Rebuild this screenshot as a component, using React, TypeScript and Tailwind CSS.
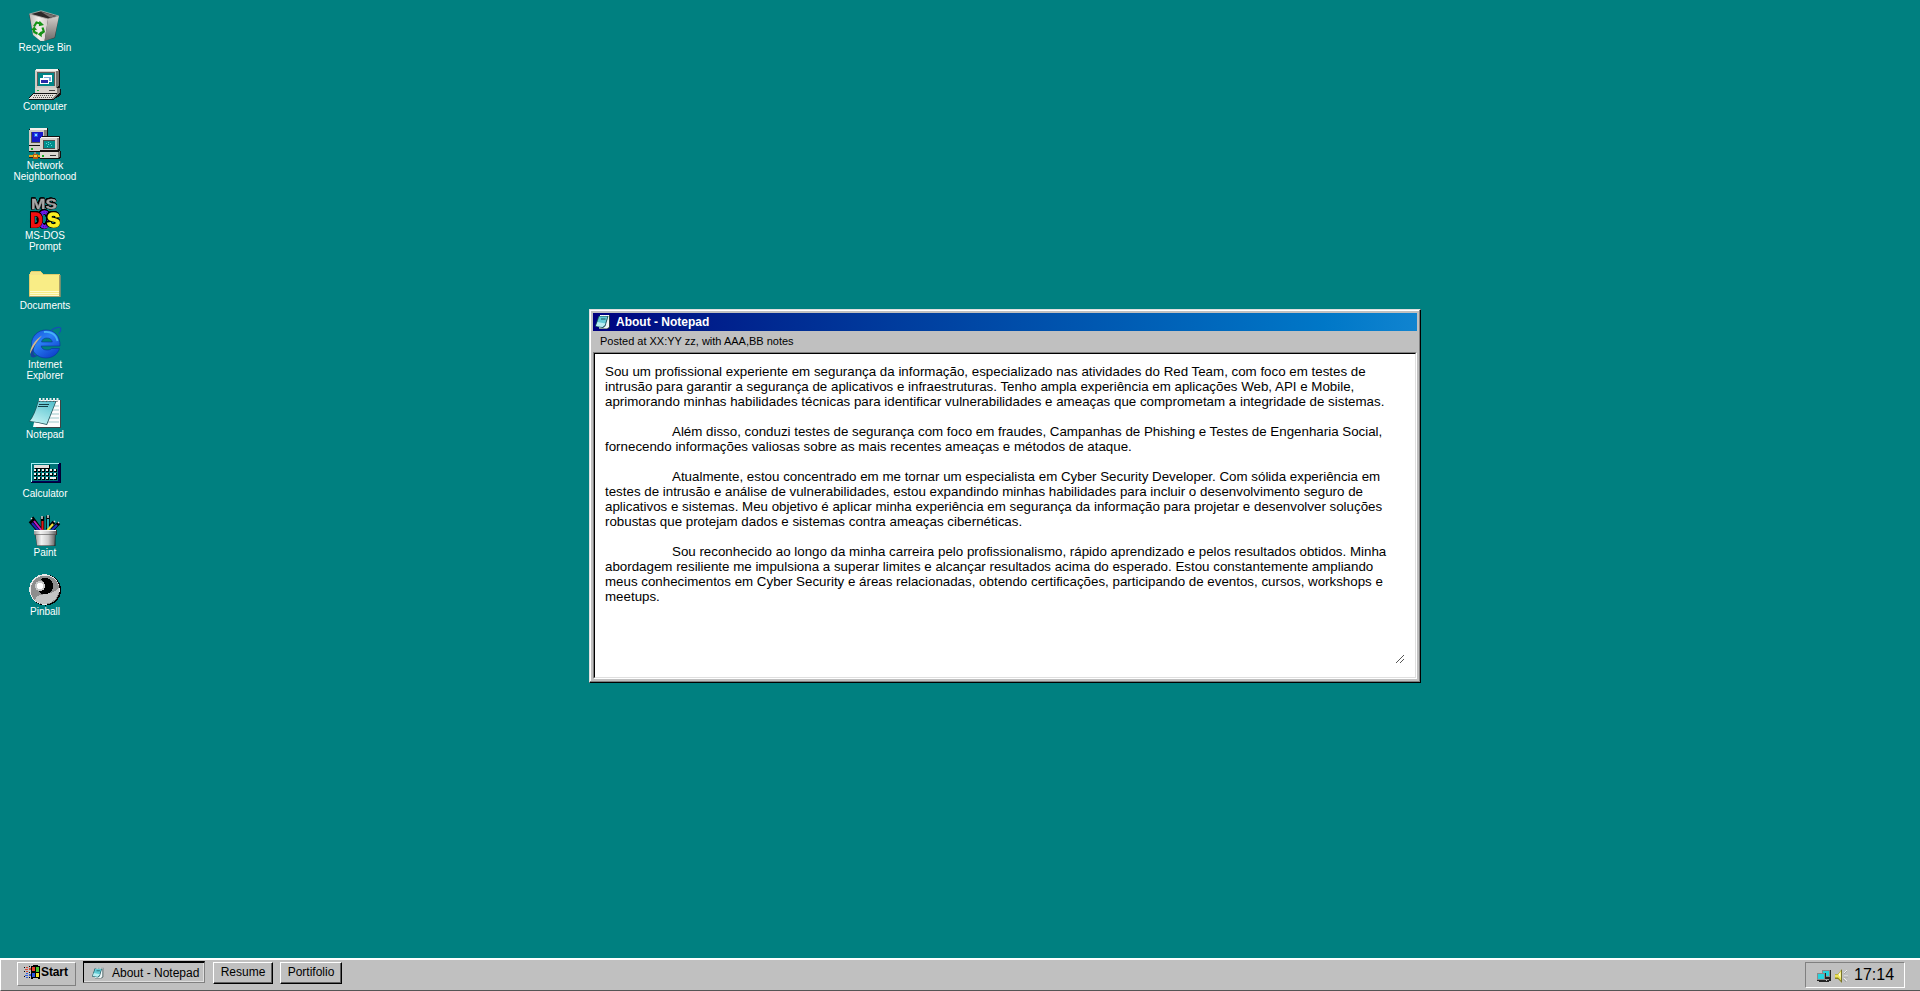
import type { ReactNode } from "react";

const Pic = ({ children, crisp = true, className = "size-8" }: { children: ReactNode; crisp?: boolean; className?: string }) => (
  <svg viewBox="0 0 32 32" className={`${className} block shrink-0 overflow-visible`} shapeRendering={crisp ? "crispEdges" : "auto"}>
    {children}
  </svg>
);

const RecycleIcon = () => (
  <Pic crisp={false}>
    <defs>
      <linearGradient id="binFront" x1="0" y1="0" x2="1" y2="0">
        <stop offset="0" stopColor="#bdb9b4" />
        <stop offset="0.5" stopColor="#f4f1ee" />
        <stop offset="1" stopColor="#cfcac6" />
      </linearGradient>
      <linearGradient id="binSide" x1="0" y1="0" x2="0" y2="1">
        <stop offset="0" stopColor="#d4cfcb" />
        <stop offset="1" stopColor="#6e6a68" />
      </linearGradient>
    </defs>
    <path d="M0 5 12 2 30 7 26 29 12 32.500 4 26Z" fill="#3c3a3a" />
    <path d="M0.500 5 19 10 15.500 32 11.500 32 4 26Z" fill="url(#binFront)" />
    <path d="M19 10 30 7 25.500 28.500 15.500 32Z" fill="url(#binSide)" />
    <path d="M2 5 12 2.500 28 6.800 19 9.300Z" fill="#2b2828" />
    <path d="M12 2.800 27 7 21 8.500Z" fill="#77716f" />
    <path d="M0.600 5 12 1.800 29.600 7 19 10Z" fill="none" stroke="#b9b5b1" strokeWidth="0.8" />
    <g fill="none" stroke="#159215" strokeWidth="2.200">
      <path d="M5 17.500 7.500 13.500 11 14.500" />
      <path d="M13.500 18.500 14.800 22.500 11.500 25" />
      <path d="M8.500 24.800 5.300 23 4.500 20" />
    </g>
    <path d="M10.500 11.800 15 16 9.800 17.300ZM12.500 22 8.800 25.300 12.800 28.300ZM2 21 5.300 17.500 8 21Z" fill="#159215" />
  </Pic>
);

const ComputerIcon = () => (
  <Pic>
    <path d="M6 2h2V1h22l1 2v16l-2 2h3v6l-8 5H0v-2l4-5h2v-5h1z" fill="#111" />
    <path d="M6 2h21v18H6z" fill="#cfcbc5" />
    <path d="M27 3l3-1v16l-3 2z" fill="#77736f" />
    <path d="M7 1h22v2H7z" fill="#f5f2ee" />
    <path d="M8 4h18v14H8z" fill="#5f5c58" />
    <path d="M9 5h16v13H9z" fill="#008486" />
    <path d="M14 7h9v7h-9z" fill="#fff" />
    <path d="M15 9h7v4h-7z" fill="#79aad8" />
    <path d="M11 10h9v6h-9z" fill="#fff" />
    <path d="M12 12h7v3h-7z" fill="#2929a8" />
    <path d="M6 20h22v5H6z" fill="#d8d4ce" />
    <path d="M28 20h3v5l-3 1z" fill="#7f7b77" />
    <path d="M8 22h2v1H8z" fill="#13b634" />
    <path d="M20 22h6v1h-6z" fill="#444" />
    <path d="M4 26h23l-3 5H0z" fill="#e1ded8" />
    <path d="M5 27.500h20M4 29.500h19" stroke="#55524e" strokeDasharray="1 1" />
    <path d="M27 26h2l-4 5h-2z" fill="#8a8681" />
  </Pic>
);

const NetworkIcon = () => (
  <Pic>
    <path d="M0 2l2-1h17v17l-3 2H0z" fill="#111" />
    <path d="M0 3h15v15H0z" fill="#cfcbc5" />
    <path d="M1 1h17v2H1z" fill="#f2efeb" />
    <path d="M15 3h3v14l-3 1z" fill="#85817c" />
    <path d="M2 5h12v11H2z" fill="#55524e" />
    <path d="M3 5h11v10H3z" fill="#1717c7" />
    <path d="M5 6h4v4H5z" fill="#2752ef" />
    <path d="M6 7h2v2H6z" fill="#8bd7ff" />
    <path d="M0 19h13v6H0z" fill="#111" />
    <path d="M0 19h12v5H0z" fill="#d3cfca" />
    <path d="M2 21h2v2H2z" fill="#14a81f" />
    <path d="M5 25h2v3H5z" fill="#8c8883" />
    <path d="M0 28h12v3H0z" fill="#222" />
    <path d="M0 28h12v2H0z" fill="#dfa718" />
    <path d="M4 27h5v5H4z" fill="#b85a10" />
    <path d="M5 28h3v2H5z" fill="#f0d044" />
    <path d="M11 11l2-2h18v15h1v7l-2 1H11z" fill="#111" />
    <path d="M11 11h17v12H11z" fill="#d6d2cc" />
    <path d="M12 10h18v1H12z" fill="#f7f4f0" />
    <path d="M28 11h2v11l-2 1z" fill="#8b8782" />
    <path d="M14 13h12v9H14z" fill="#504d4a" />
    <path d="M15 14h11v7H15z" fill="#008e8c" />
    <path d="M17 16h1v1h-1zm2-1h1v1h-1zm2 1h1v1h-1zm-2 1h1v1h-1zm3 1h1v1h-1zm-4 1h1v1h-1z" fill="#5ad7d4" />
    <path d="M11 25h18v6H11z" fill="#dcd8d2" />
    <path d="M29 25l2-1v6l-2 1z" fill="#7d7974" />
    <path d="M13 28h2v2h-2z" fill="#14a81f" />
    <path d="M21 28h6v1h-6z" fill="#333" />
  </Pic>
);

const outline =
  "[filter:drop-shadow(0.7px_0_0_#000)_drop-shadow(-0.7px_0_0_#000)_drop-shadow(0_0.7px_0_#000)_drop-shadow(0_-0.7px_0_#000)]";

const DosIcon = () => (
  <Pic crisp={false}>
    <text x="2" y="12" fontSize="14" textLength="26" lengthAdjust="spacingAndGlyphs" fill="#a5a5a5" stroke="#a5a5a5" strokeWidth="0.3" className={`${outline} font-bold`}>MS</text>
    <ellipse cx="15.500" cy="22.500" rx="4.800" ry="7.300" fill="none" stroke="#7a18f0" strokeWidth="3.800" className={outline} />
    <ellipse cx="15.500" cy="22.500" rx="4.800" ry="7.300" fill="none" stroke="#2b20a8" strokeWidth="1.400" strokeDasharray="1 1.500" />
    <text x="1.500" y="29.500" fontSize="20" textLength="12" lengthAdjust="spacingAndGlyphs" fill="#f01010" stroke="#f01010" strokeWidth="1.500" className={`${outline} font-bold`}>D</text>
    <text x="18" y="29.500" fontSize="20" textLength="13" lengthAdjust="spacingAndGlyphs" fill="#f9ee22" stroke="#f9ee22" strokeWidth="1.300" className={`${outline} font-bold`}>S</text>
  </Pic>
);

const FolderIcon = () => (
  <Pic>
    <path d="M1 5l2-1h9l2 3h17v23H0V7h1z" fill="#e1cd6c" />
    <path d="M2 5h10l2 3h17v1H1V7z" fill="#f4e587" />
    <path d="M1 8h29v21H1z" fill="#f9ed86" />
    <path d="M1 24h29v1H1zm0 2h29v1H1zm0 2h29v1H1z" fill="#fffbd0" />
    <path d="M30 8h1v22H0v-1h30z" fill="#a8a06a" />
    <path d="M31 8h1v22h-1z" fill="#6f8f70" />
  </Pic>
);

const ExplorerIcon = () => (
  <Pic crisp={false}>
    <defs>
      <linearGradient id="ieBlue" x1="0" y1="0" x2="0.7" y2="1">
        <stop offset="0" stopColor="#1554d8" />
        <stop offset="0.45" stopColor="#2a80f5" />
        <stop offset="1" stopColor="#0f42cc" />
      </linearGradient>
    </defs>
    <path d="M31 20H12.200C12.600 22.600 14.700 24 18 24c2.200 0 3.600-.5 4.600-1.500H30.500C28.500 28.500 23.500 32 17 32 8.500 32 2.500 26 2.500 18.200 2.500 10 9 4 17 4c8.500 0 14.300 6 14 16zM12.500 16h10.800C22.800 13.200 20.700 12 17.800 12c-2.800 0-4.800 1.300-5.300 4z" fill="url(#ieBlue)" stroke="#0a2f9c" strokeWidth="0.600" fillRule="evenodd" />
    <path d="M15 6c6-1 12 2 13.500 9" fill="none" stroke="#46b4f5" strokeWidth="1.800" />
    <path d="M22 4.500C27 1 31.500.5 31.800 2.500c.3 1.500-.5 3.500-2 5.500" fill="none" stroke="#1450b4" strokeWidth="1.200" />
    <path d="M11 11.500C4 18 .5 26 1.800 30c1 2.500 4.500 1.500 8-1-3 .8-4.600.4-5.200-1.500C3.700 24 6.500 17 11 11.500z" fill="#15419c" />
    <path d="M13 9.500C5.500 14.500 1 21.500 1 28 3.500 22.500 7 16.500 13 9.500z" fill="#d3b98b" />
  </Pic>
);

const NotepadIcon = () => (
  <Pic crisp={false}>
    <defs>
      <linearGradient id="padCover" x1="0.7" y1="0" x2="0.2" y2="1">
        <stop offset="0" stopColor="#5cc3cf" />
        <stop offset="0.5" stopColor="#8fdce2" />
        <stop offset="1" stopColor="#c4f3f4" />
      </linearGradient>
    </defs>
    <path d="M11 4h21v28H7z" fill="#3f4444" />
    <path d="M10 4h21v27H4z" fill="#fcfcfc" />
    <path d="M24 10h6M23 14h7M21 18h9M20 22h10M19 26h11" stroke="#9dc9cc" strokeWidth="1" />
    <path d="M9 5h18.500l-9.500 24q-8-2.500-18-3.500 5-6 9-20.500z" fill="#23555b" />
    <path d="M9.500 5.500h17L17.500 28q-8-2-16.500-3 5-6 8.500-19.500z" fill="url(#padCover)" />
    <path d="M10 8.500h10M9 10.500h10" stroke="#123f46" strokeWidth="1" />
    <path d="M10 3.500h21" stroke="#e4e8e8" strokeWidth="3" strokeDasharray="2 1.500" />
    <path d="M10 5.500h21" stroke="#555" strokeWidth="1" strokeDasharray="1 2.500" />
  </Pic>
);

const SmallNotepadIcon = ({ className }: { className: string }) => (
  <svg viewBox="0 0 16 16" className={`${className} block shrink-0`}>
    <path d="M5 1h10v12l-2 2H4z" fill="#243c40" />
    <path d="M5 1h9v12l-2 1.500H4z" fill="#eef7f7" />
    <path d="M3.500 2h10l-3 10-2.500 2L0 12.500z" fill="#1d5058" />
    <path d="M4.200 2.600h8.300L9.800 11 7.500 13 1 12z" fill="#62cbd5" />
    <path d="M1 12l1.500-4 8 1.500L9.800 11 7.500 13z" fill="#b9eff2" />
    <path d="M6 5h4.500" stroke="#1c5660" strokeWidth="1" />
    <path d="M5 1.500h9" stroke="#fff" strokeWidth="1.200" strokeDasharray="1 1" />
  </svg>
);

const CalculatorIcon = () => (
  <Pic>
    <path d="M2 8h30v20H2z" fill="#000030" />
    <path d="M2 8h27v18H2z" fill="#007478" />
    <path d="M29 9h2v18h-2zM3 26h28v1H3z" fill="#00005a" />
    <path d="M2 8.500h28M2.500 8v19" stroke="#9ff1f4" strokeDasharray="1.500 0.500" />
    <path d="M6 10h15v4H6z" fill="#000" />
    <path d="M5 10h15v3H5z" fill="#e2dedb" />
    {[14, 18, 22].map((y) =>
      [5, 9, 13, 17, 21, 25].map((x) => (
        <g key={`${x}-${y}`}>
          <rect x={x} y={y} width="3" height="3" fill="#000" />
          <rect x={x} y={y} width="2" height="2" fill="#f4f1ee" />
        </g>
      )),
    )}
    <path d="M21 22h6v2h-6z" fill="#f4f1ee" />
  </Pic>
);

const PaintIcon = () => (
  <Pic crisp={false}>
    <defs>
      <linearGradient id="cup" x1="0" y1="0" x2="1" y2="0">
        <stop offset="0" stopColor="#9a9a9a" />
        <stop offset="0.3" stopColor="#f2f2f2" />
        <stop offset="0.65" stopColor="#ccc" />
        <stop offset="1" stopColor="#666" />
      </linearGradient>
    </defs>
    <g fill="none" strokeWidth="3.500" stroke="#000">
      <path d="M1 7l8 9M3 3.500l9 12.500M13.500 2.500v13M19 1.500v14M25 8l-7 8M30 9l-7 7" />
    </g>
    <g fill="none" strokeWidth="2">
      <path d="M3 9l7 8" stroke="#2222b8" />
      <path d="M5 7l8 10" stroke="#c01cc0" />
      <path d="M13.500 7v10" stroke="#e01818" />
      <path d="M19 5v11" stroke="#26a7b5" />
      <path d="M24 10l-6 7" stroke="#f5e33a" />
      <path d="M28 11l-6 6" stroke="#2238c0" />
      <path d="M2 4l1 1M13 2v3M19 1v3M25 8l1-1M29 9l1-1" stroke="#d9d9d9" strokeWidth="1.500" />
    </g>
    <path d="M6 20h20.500v12H8z" fill="#222" />
    <path d="M6.500 20h19.500l-.5 11.500H8z" fill="url(#cup)" />
    <path d="M5 16h23v5H5z" fill="#333" />
    <path d="M5 16h22v4.500H5z" fill="url(#cup)" />
    <path d="M5 16.500h22" stroke="#f5f5f5" />
  </Pic>
);

const PinballIcon = () => (
  <Pic>
    <circle cx="16.500" cy="17" r="15.500" fill="#000" />
    <circle cx="15.500" cy="16.500" r="15.200" fill="#e9e9e9" />
    <circle cx="16" cy="17" r="14.500" fill="#8d8d8d" />
    <path d="M6 27c1-5 5-5 11-6 6-1 10-3 13-6 1 7-5 16-14 16-4 0-8-1-10-4z" fill="#c4c4c4" />
    <path d="M15 5q9 0 9 8t-9 8q-5 0-5-3 5 0 6-5 0-4-4-6 0-2 3-2z" fill="#000" />
    <circle cx="11" cy="13" r="5" fill="#c8c8c8" />
    <circle cx="11" cy="13" r="3" fill="#fff" />
  </Pic>
);

const FlagIcon = () => (
  <svg viewBox="0 0 17 14" className="block h-3.5 w-[17px] shrink-0" shapeRendering="crispEdges">
    <path d="M7 1h2V0h5v1h2v13h-2v-1H9v1H7z" fill="#000" />
    <path d="M8 2h3v4H8z" fill="#e8402c" />
    <path d="M12 2h3v5h-3z" fill="#4cc22e" />
    <path d="M8 8h3v4H8z" fill="#2a55e0" />
    <path d="M12 8h3v4h-3z" fill="#f4e02c" />
    <path d="M0 2h1v1H0zM0 6h1v1H0zM0 11h1v1H0zM5 1h1v1H5zM5 7h1v1H5zM5 12h1v1H5z" fill="#000" />
    <path d="M2 2h2v1H2zM5 3h2v2H5zM1 4h3v1H1zM2 6h2v1H2z" fill="#d8493a" />
    <path d="M2 8h2v1H2zM5 9h2v2H5zM1 10h3v1H1zM2 12h2v1H2z" fill="#315bd8" />
  </svg>
);

const TrayNetworkIcon = () => (
  <svg viewBox="0 0 16 16" className="block size-4 shrink-0" shapeRendering="crispEdges">
    <path d="M6 2h9v9H6z" fill="#222" />
    <path d="M6 2h8v7H6z" fill="#8a8a8a" />
    <path d="M7 3h6v5H7z" fill="#25d3dd" />
    <path d="M1 5h9v8H1z" fill="#222" />
    <path d="M1 5h8v7H1z" fill="#8a8a8a" />
    <path d="M2 6h6v5H2z" fill="#25d3dd" />
    <path d="M3 13h10v1H3zM11 10h4v3h-4z" fill="#222" />
    <path d="M9 11h4v1H9z" fill="#9a9a9a" />
  </svg>
);

const SpeakerIcon = () => (
  <svg viewBox="0 0 16 16" className="ml-0.5 block size-4 shrink-0">
    <path d="M1 6h3l4-5v14l-4-4H1z" fill="#8a8420" />
    <path d="M1 6.500h3l3-4v10l-3-3H1z" fill="#eee45a" />
    <path d="M4.500 6.500l2-2.500v6z" fill="#fffce0" />
    <path d="M7 2h1v12H7z" fill="#77732c" />
    <path d="M10 5l3-3M10 8h4M10 10l3 3" stroke="#eee" strokeWidth="1" />
    <path d="M10 6l3-3M10 9h4M9 11l3 3" stroke="#999" strokeWidth="0.700" />
  </svg>
);

const shortcuts: { icon: ReactNode; lines: string[] }[] = [
  { icon: <RecycleIcon />, lines: ["Recycle Bin"] },
  { icon: <ComputerIcon />, lines: ["Computer"] },
  { icon: <NetworkIcon />, lines: ["Network", "Neighborhood"] },
  { icon: <DosIcon />, lines: ["MS-DOS", "Prompt"] },
  { icon: <FolderIcon />, lines: ["Documents"] },
  { icon: <ExplorerIcon />, lines: ["Internet", "Explorer"] },
  { icon: <NotepadIcon />, lines: ["Notepad"] },
  { icon: <CalculatorIcon />, lines: ["Calculator"] },
  { icon: <PaintIcon />, lines: ["Paint"] },
  { icon: <PinballIcon />, lines: ["Pinball"] },
];

const paragraphs: string[][] = [
  [
    "Sou um profissional experiente em segurança da informação, especializado nas atividades do Red Team, com foco em testes de",
    "intrusão para garantir a segurança de aplicativos e infraestruturas. Tenho ampla experiência em aplicações Web, API e Mobile,",
    "aprimorando minhas habilidades técnicas para identificar vulnerabilidades e ameaças que comprometam a integridade de sistemas.",
  ],
  [
    "Além disso, conduzi testes de segurança com foco em fraudes, Campanhas de Phishing e Testes de Engenharia Social,",
    "fornecendo informações valiosas sobre as mais recentes ameaças e métodos de ataque.",
  ],
  [
    "Atualmente, estou concentrado em me tornar um especialista em Cyber Security Developer. Com sólida experiência em",
    "testes de intrusão e análise de vulnerabilidades, estou expandindo minhas habilidades para incluir o desenvolvimento seguro de",
    "aplicativos e sistemas. Meu objetivo é aplicar minha experiência em segurança da informação para projetar e desenvolver soluções",
    "robustas que protejam dados e sistemas contra ameaças cibernéticas.",
  ],
  [
    "Sou reconhecido ao longo da minha carreira pelo profissionalismo, rápido aprendizado e pelos resultados obtidos. Minha",
    "abordagem resiliente me impulsiona a superar limites e alcançar resultados acima do esperado. Estou constantemente ampliando",
    "meus conhecimentos em Cyber Security e áreas relacionadas, obtendo certificações, participando de eventos, cursos, workshops e",
    "meetups.",
  ],
];

function NotepadWindow() {
  return (
    <section className="flex h-[374px] w-[832px] flex-col border border-t-[#dfdfdf] border-r-black border-b-black border-l-[#dfdfdf] bg-[#c0c0c0] p-[3px] shadow-[inset_-1px_-1px_0_#808080,inset_1px_1px_0_#fff]">
      <header className="flex h-[18px] shrink-0 items-center gap-[5px] bg-linear-to-r from-[#000080] to-[#1084d0] pl-0.5">
        <SmallNotepadIcon className="size-4" />
        <h1 className="text-xs font-bold text-white">About - Notepad</h1>
      </header>
      <p className="h-[21px] shrink-0 pl-[7px] text-[11px] leading-[21px]">Posted at XX:YY zz, with AAA,BB notes</p>
      <div className="flex grow border border-t-[#808080] border-r-white border-b-white border-l-[#808080]">
        <div className="flex grow flex-col border border-t-black border-r-[#dfdfdf] border-b-[#dfdfdf] border-l-black bg-white pt-2.5 pr-2.5 pb-[13px] pl-2.5">
          <div className="flex grow flex-col gap-[15px] text-[13.333px] leading-[15px] whitespace-nowrap">
            {paragraphs.map((lines, i) => (
              <div key={i}>
                {lines.map((line, j) => (
                  <p key={j} className={i > 0 && j === 0 ? "pl-[67px]" : ""}>{line}</p>
                ))}
              </div>
            ))}
          </div>
          <svg viewBox="0 0 9 9" className="size-[9px] shrink-0 self-end" shapeRendering="crispEdges">
            {[0, 1, 2, 3, 4, 5, 6, 7].map((n) => (
              <rect key={n} x={n} y={7 - n} width="1" height="1" fill="#555" />
            ))}
            {[0, 1, 2, 3].map((n) => (
              <rect key={n} x={4 + n} y={7 - n} width="1" height="1" fill="#555" />
            ))}
          </svg>
        </div>
      </div>
    </section>
  );
}

function TaskButton({ label, className }: { label: string; className: string }) {
  return (
    <button className={`${className} mt-px flex h-[22px] items-start justify-center border border-t-white border-r-black border-b-black border-l-white pt-0.5 text-xs leading-[14px] shadow-[inset_-1px_-1px_0_#606060]`}>
      {label}
    </button>
  );
}

function Taskbar() {
  return (
    <footer className="flex h-[33px] shrink-0 border-t-2 border-b border-l border-t-white border-b-[#555] border-l-white bg-[#c0c0c0] pt-px pl-4">
      <button className="mt-px flex h-6 w-[59px] items-center border border-t-white border-r-[#808080] border-b-[#808080] border-l-white pb-1 pl-1.5 text-xs font-bold tracking-[-0.1px]">
        <FlagIcon />
        Start
      </button>
      <button className="ml-[7px] flex h-[22px] w-[122px] items-center border-t-2 border-r border-b border-l border-t-black border-r-[#808080] border-b-[#808080] border-l-black pl-2 text-xs shadow-[inset_-1px_-1px_0_#dfdfdf]">
        <SmallNotepadIcon className="mr-2 size-3" />
        About - Notepad
      </button>
      <TaskButton label="Resume" className="ml-2 w-[60px]" />
      <TaskButton label="Portifolio" className="ml-[7px] w-[62px]" />
      <div className="mt-px mr-[15px] ml-auto flex h-[26px] w-[100px] items-center border border-t-[#808080] border-r-white border-b-white border-l-[#808080] pt-px pl-2.5">
        <TrayNetworkIcon />
        <SpeakerIcon />
        <time className="-mt-px ml-1 text-base leading-none">17:14</time>
      </div>
    </footer>
  );
}

export default function App() {
  return (
    <div className="flex h-[991px] w-[1920px] flex-col overflow-hidden bg-[#008080] font-['Liberation_Sans',Arial,sans-serif] text-black">
      <main className="flex grow">
        <nav className="flex w-[90px] flex-col gap-[15px] pt-[9px]">
          {shortcuts.map(({ icon, lines }) => (
            <a key={lines[0]} className="flex flex-col items-center text-[10px] leading-[11px] text-white">
              <span className="mb-px">{icon}</span>
              {lines.map((line) => (
                <span key={line}>{line}</span>
              ))}
            </a>
          ))}
        </nav>
        <div className="pt-[309px] pl-[499px]">
          <NotepadWindow />
        </div>
      </main>
      <Taskbar />
    </div>
  );
}
